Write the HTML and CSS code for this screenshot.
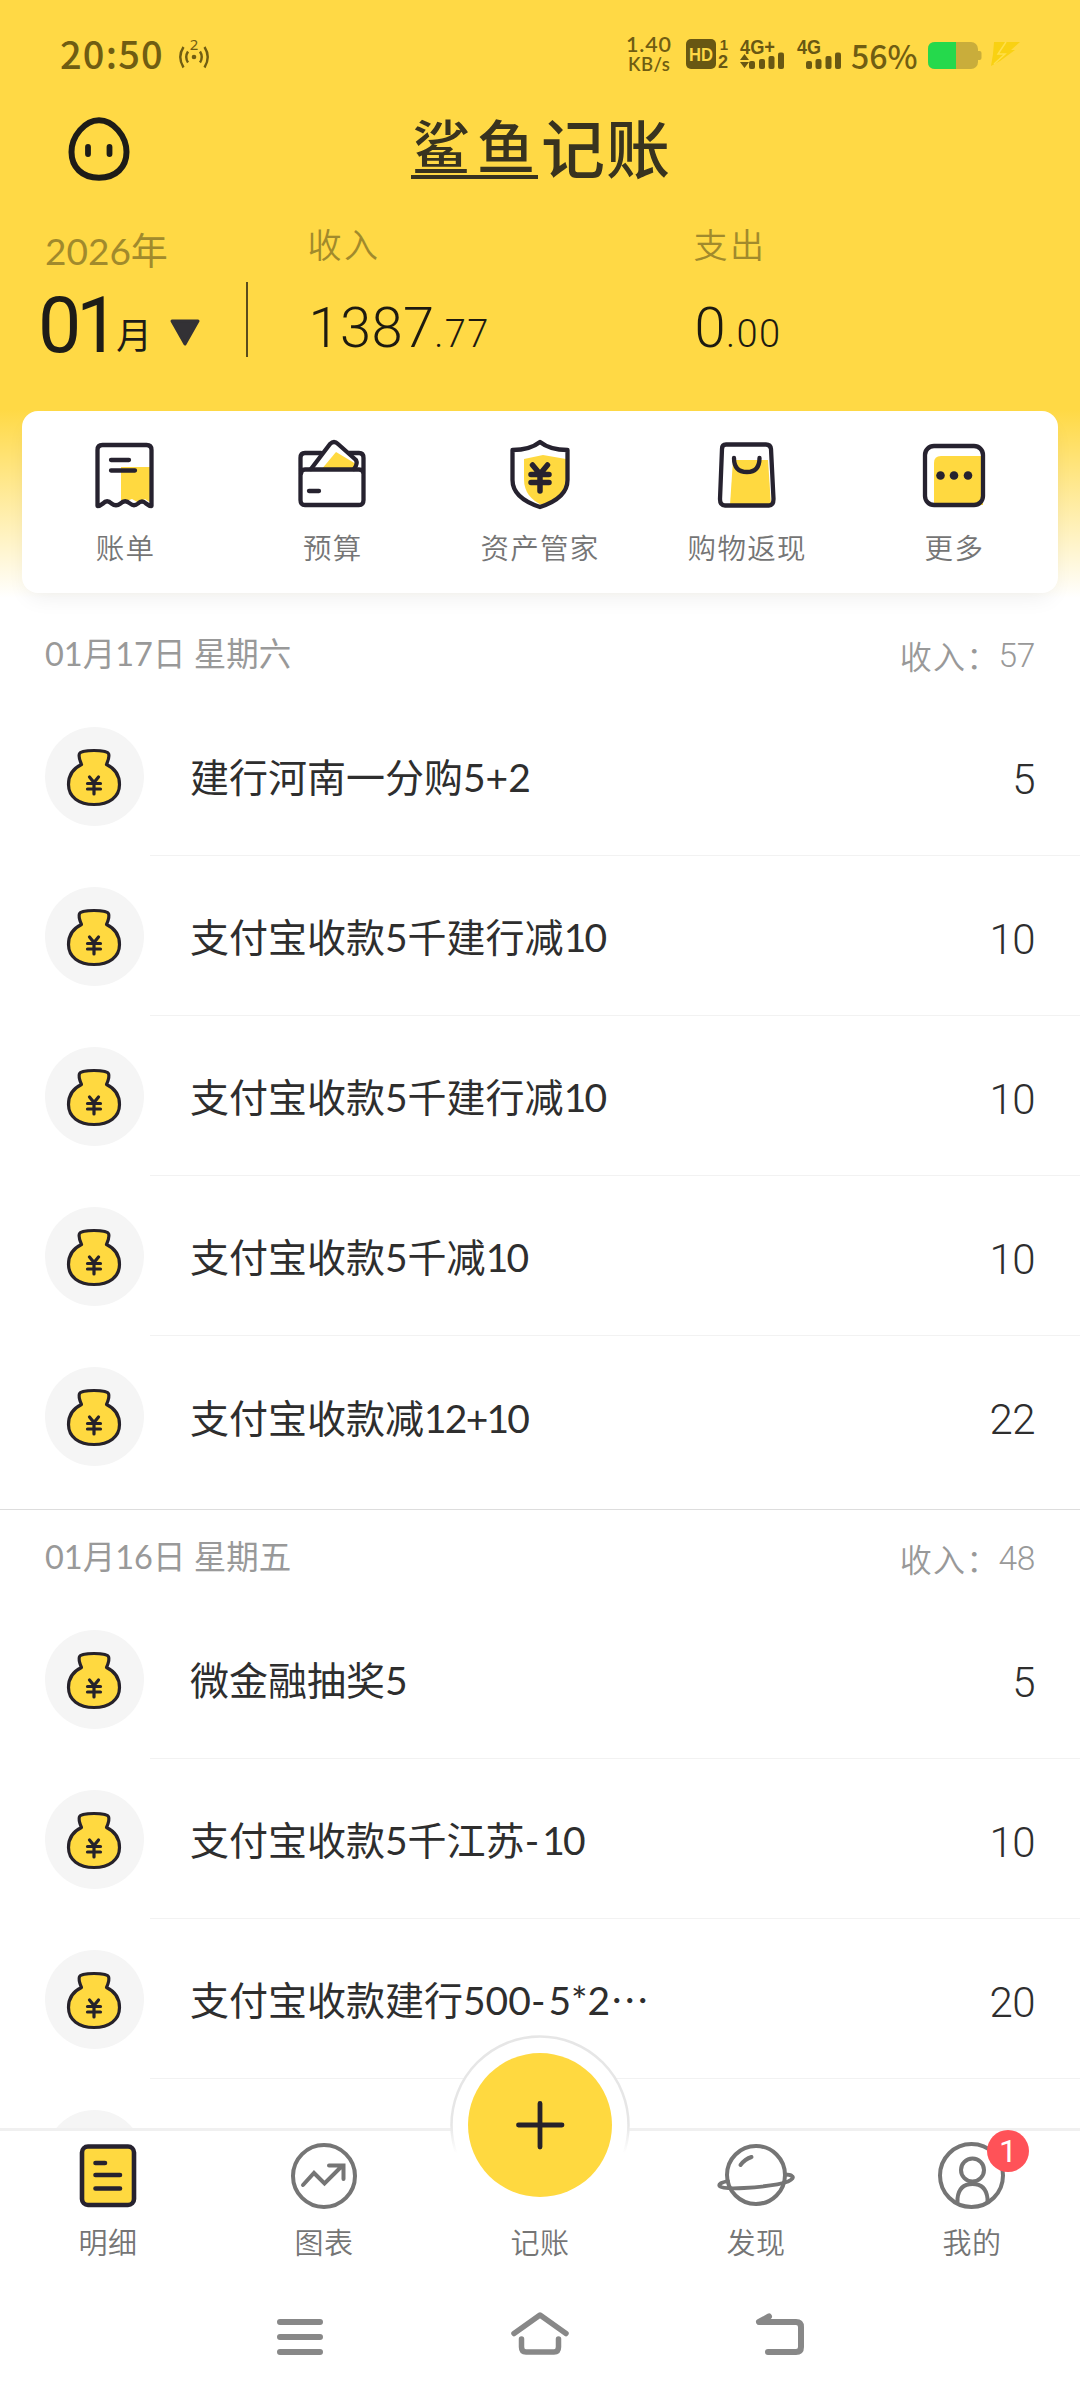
FILE: index.html
```html
<!DOCTYPE html>
<html lang="zh-CN">
<head>
<meta charset="utf-8">
<title>鲨鱼记账</title>
<link rel="stylesheet" href="styles.css">
</head>
<body>
<svg class="defs" width="0" height="0" aria-hidden="true">
  <symbol id="bag" viewBox="0 0 56 60">
    <path d="M15.500 17.500C13 12 12.500 9 13.500 6.500C15 2.500 41 2.500 42.500 6.500C43.500 9 43 12 40.500 17.500C49 21.500 53.500 29 53.500 37.500C53.500 50 43 57.500 28 57.500C13 57.500 2.500 50 2.500 37.500C2.500 29 7 21.500 15.500 17.500Z" fill="#ffd940" stroke="#26222a" stroke-width="3.200" stroke-linejoin="round"/>
    <path d="M23.500 30L28 35.500L32.500 30M21.500 36.500H34.500M21.500 42H34.500M28 36V47" fill="none" stroke="#26222a" stroke-width="3.200" stroke-linecap="round" stroke-linejoin="round"/>
  </symbol>
</svg>
<div class="app">
  <header class="top">
    <div class="status">
      <span class="clock">20:50</span>
      <svg class="hotspot" width="32" height="36" viewBox="0 -4 32 36" fill="none" stroke="#705d12" stroke-width="2.400">
        <text x="16" y="12" class="t-hot">2</text>
        <circle cx="16" cy="19" r="2.300" fill="#705d12" stroke="none"/>
        <path d="M10 13.500Q6.500 19 10 24.500M22 13.500Q25.500 19 22 24.500M5.500 9Q-1 19 5.500 29.500M26.500 9Q33 19 26.500 29.500"/>
      </svg>
      <span class="speed"><b>1.40</b><i>KB/s</i></span>
      <svg class="signals" width="160" height="40" viewBox="0 -2 160 40" fill="#685713">
        <rect x="0" y="3" width="30" height="30" rx="5"/>
        <text x="15" y="25" class="t-hd" textLength="24" lengthAdjust="spacingAndGlyphs">HD</text>
        <text x="38" y="14" class="t-num">1</text>
        <text x="37" y="32" class="t-num2">2</text>
        <text x="54" y="17.500" class="t-net" textLength="35" lengthAdjust="spacingAndGlyphs">4G+</text>
        <path d="M58.500 18L63 24H54ZM58.500 32L63 26H54Z"/>
        <rect x="63" y="25" width="6" height="8" rx="2"/><rect x="73" y="23" width="6" height="10" rx="2"/><rect x="82.500" y="20" width="6" height="13" rx="2"/><rect x="92" y="16.500" width="6" height="16.500" rx="2"/>
        <text x="111" y="17.500" class="t-net" textLength="24" lengthAdjust="spacingAndGlyphs">4G</text>
        <rect x="120" y="25" width="6" height="8" rx="2"/><rect x="129.500" y="23" width="6" height="10" rx="2"/><rect x="139.500" y="20" width="6" height="13" rx="2"/><rect x="149" y="16.500" width="6" height="16.500" rx="2"/>
      </svg>
      <span class="percent">56%</span>
      <svg class="battery" width="94" height="28" viewBox="0 0 94 28">
        <rect x="0" y="0" width="50" height="27" rx="7" fill="#c9ad3b"/>
        <path d="M50 9h1.500q2 0 2 2v5q0 2-2 2H50z" fill="#c9ad3b"/>
        <path d="M7 0H28V27H7Q0 27 0 20V7Q0 0 7 0Z" fill="#25d94c"/>
        <path d="M66 0H92L83 8H87L72 19L63 24L65 12Z" fill="#f9d112"/>
        <path d="M78 0L70 12H77L66 22" fill="none" stroke="#ffdf4a" stroke-width="1.500"/>
      </svg>
    </div>
    <div class="brand">
      <svg class="avatar" width="62" height="64" viewBox="0 0 62 64" fill="none" stroke="#1d1c18">
        <path d="M31 3.200C45 3.200 58.500 19 58.500 35C58.500 50 48 60.800 31 60.800C14 60.800 3.500 50 3.500 35C3.500 19 17 3.200 31 3.200Z" stroke-width="6"/>
        <path d="M20 30V37M41.500 30V37" stroke-width="5.800" stroke-linecap="round"/>
      </svg>
      <h1 class="logo"><span class="logo-a">鲨鱼</span><span class="logo-b">记账</span></h1>
    </div>
    <div class="summary">
      <div class="month">
        <div class="year">2026年</div>
        <div class="pick"><span class="mm">01</span><span class="yue">月</span>
          <svg class="tri" width="32" height="28" viewBox="0 0 32 28"><path d="M3 2H29L16 25Z" fill="#333135" stroke="#333135" stroke-width="3" stroke-linejoin="round"/></svg>
        </div>
      </div>
      <div class="rule"></div>
      <div class="sum income"><div class="cap">收入</div><div class="money">1387<small>.77</small></div></div>
      <div class="sum"><div class="cap">支出</div><div class="money">0<small>.00</small></div></div>
    </div>
    <nav class="card">
      <a class="tool">
        <svg width="72" height="72" viewBox="0 0 72 72" fill="none" stroke="#26222f" stroke-width="4.300" stroke-linecap="round" stroke-linejoin="round">
          <path d="M32 29H62V65L56 61L50 65L43 61L32 65Z" fill="#ffd940" stroke="none"/>
          <path d="M8.500 68V12Q8.500 7 13.500 7H57.500Q62.500 7 62.500 12V68Q60 68 57 65.500Q53 61.500 49 65.500Q45 69 41 65.500Q36 61 31.500 65.500Q27 69 22.500 65.500Q18 61 14 65.500Q11 68 8.500 68Z"/>
          <path d="M22 22H40M22 32.500H46"/>
        </svg>
        <span>账单</span></a>
      <a class="tool">
        <svg width="72" height="72" viewBox="0 0 72 72" fill="none" stroke="#26222f" stroke-width="4.300" stroke-linecap="round" stroke-linejoin="round">
          <path d="M25 32L40 14L60 26V32Z" fill="#ffd940" stroke="none"/>
          <path d="M25 15H9Q4.500 15 4.500 20V62Q4.500 67 9 67H63Q67.500 67 67.500 62V20Q67.500 15 63 15H53M5 36Q5 31.500 9 31.500H63Q67.500 31.500 67.500 36"/>
          <path d="M15 31L34 6Q38 2 42 6L60 22Q62 26 58 31"/>
          <path d="M13 53H23"/>
        </svg>
        <span>预算</span></a>
      <a class="tool">
        <svg width="72" height="72" viewBox="0 0 72 72" fill="none" stroke="#26222f" stroke-width="4.300" stroke-linecap="round" stroke-linejoin="round">
          <path d="M20 21L39 17L62 21V41Q62 58 40 68Q20 60 20 41Z" fill="#ffd940" stroke="none"/>
          <path d="M36 4Q26 12 8.500 12V42Q8.500 60 36 69Q63.500 60 63.500 42V12Q46 12 36 4Z"/>
          <path d="M28.500 27L36 36L43.500 27M27 36.500H45M27 44.500H45M36 36.500V53" stroke-width="5.500"/>
        </svg>
        <span>资产管家</span></a>
      <a class="tool">
        <svg width="72" height="72" viewBox="0 0 72 72" fill="none" stroke="#26222f" stroke-width="4.300" stroke-linecap="round" stroke-linejoin="round">
          <path d="M22 22H57L60 67H19Z" fill="#ffd940" stroke="none"/>
          <path d="M15 6.500H55Q59.500 6.500 60 11L62.500 61Q62.500 67.500 58 67.500H14Q9 67.500 9 61L11 11Q11 6.500 15 6.500Z"/>
          <path d="M23 20Q23 34 36 34Q48.500 34 48.500 20"/>
        </svg>
        <span>购物返现</span></a>
      <a class="tool">
        <svg width="72" height="72" viewBox="0 0 72 72" fill="none" stroke="#26222f" stroke-width="4.300" stroke-linecap="round" stroke-linejoin="round">
          <path d="M23 18H65V67H16V25Q16 18 23 18Z" fill="#ffd940" stroke="none"/>
          <rect x="7" y="8" width="58" height="59" rx="9"/>
          <g fill="#26222f" stroke="none"><circle cx="22.500" cy="37.500" r="4.300"/><circle cx="36" cy="37.500" r="4.300"/><circle cx="50" cy="37.500" r="4.300"/></g>
        </svg>
        <span>更多</span></a>
    </nav>
  </header>

  <main class="list">
    <section class="day">
      <div class="day-head"><span class="date">01月17日 星期六</span><span class="total">收入：<em>57</em></span></div>
      <div class="row"><span class="disc"><svg width="56" height="60"><use href="#bag"/></svg></span><div class="cell"><span class="name">建行河南一分购5+2</span><span class="amt">5</span></div></div>
      <div class="row"><span class="disc"><svg width="56" height="60"><use href="#bag"/></svg></span><div class="cell"><span class="name">支付宝收款5千建行减<span class="num">10</span></span><span class="amt">10</span></div></div>
      <div class="row"><span class="disc"><svg width="56" height="60"><use href="#bag"/></svg></span><div class="cell"><span class="name">支付宝收款5千建行减<span class="num">10</span></span><span class="amt">10</span></div></div>
      <div class="row"><span class="disc"><svg width="56" height="60"><use href="#bag"/></svg></span><div class="cell"><span class="name">支付宝收款5千减<span class="num">10</span></span><span class="amt">10</span></div></div>
      <div class="row last"><span class="disc"><svg width="56" height="60"><use href="#bag"/></svg></span><div class="cell"><span class="name">支付宝收款减<span class="num">12+10</span></span><span class="amt">22</span></div></div>
    </section>
    <section class="day">
      <div class="day-head"><span class="date">01月16日 星期五</span><span class="total">收入：<em>48</em></span></div>
      <div class="row"><span class="disc"><svg width="56" height="60"><use href="#bag"/></svg></span><div class="cell"><span class="name">微金融抽奖5</span><span class="amt">5</span></div></div>
      <div class="row"><span class="disc"><svg width="56" height="60"><use href="#bag"/></svg></span><div class="cell"><span class="name">支付宝收款5千江苏<span class="dash">-</span><span class="num">10</span></span><span class="amt">10</span></div></div>
      <div class="row"><span class="disc"><svg width="56" height="60"><use href="#bag"/></svg></span><div class="cell"><span class="name">支付宝收款建行500<span class="dash">-</span>5*2<span class="dots">…</span></span><span class="amt">20</span></div></div>
      <div class="row"><span class="disc"></span><div class="cell"></div></div>
    </section>
  </main>

  <footer class="bottom">
    <nav class="tabs">
      <a class="tab">
        <svg width="80" height="70" viewBox="0 0 80 70" fill="none" stroke="#26222f" stroke-width="4.600" stroke-linecap="round">
          <rect x="14" y="5.500" width="52" height="58.500" rx="6" fill="#ffd940"/>
          <path d="M27.500 22H37M27.500 34H52M27.500 47.500H52"/>
        </svg><span>明细</span></a>
      <a class="tab">
        <svg width="80" height="70" viewBox="0 0 80 70" fill="none" stroke="#757575" stroke-width="4" stroke-linecap="round" stroke-linejoin="round">
          <circle cx="40" cy="35" r="31"/>
          <path d="M19 44L30 32L40.500 42.500L58 25M45 24.500H59.500V38" stroke-linejoin="miter"/>
        </svg><span>图表</span></a>
      <a class="tab">
        <svg class="fab" width="184" height="184" viewBox="0 0 184 184">
          <defs><linearGradient id="fade" x1="0" y1="0" x2="0" y2="1"><stop offset=".5" stop-color="#e6e6e6"/><stop offset=".66" stop-color="#fff"/></linearGradient></defs>
          <circle cx="92" cy="92" r="88.500" fill="#fff" stroke="url(#fade)" stroke-width="2.500"/>
          <circle cx="92" cy="92" r="72" fill="#ffd940"/>
          <path d="M92 70.500V114M70.500 92H114" stroke="#26222a" stroke-width="4.800" stroke-linecap="round"/>
        </svg><span class="fab-label">记账</span></a>
      <a class="tab">
        <svg width="80" height="70" viewBox="0 0 80 70" fill="none" stroke="#757575" stroke-width="4" stroke-linecap="round">
          <circle cx="40" cy="34" r="29"/>
          <path d="M24.500 24Q29 18 35.500 16"/>
          <path d="M12 40Q2 42 3.500 45Q6 48 28 47Q60 45 72 40.500Q79 37 76 35Q74 33.500 69 33.500" stroke-width="3.800"/>
        </svg><span>发现</span></a>
      <a class="tab">
        <svg width="80" height="70" viewBox="0 0 80 70" fill="none" stroke="#757575" stroke-width="4" stroke-linecap="round">
          <circle cx="39.500" cy="34.500" r="31.500"/>
          <circle cx="40.500" cy="29" r="11.500"/>
          <path d="M25.500 60.500V57.500Q27 43 40.500 43Q54 43 55.500 57.500V60.500"/>
        </svg><span>我的</span><b class="badge">1</b></a>
    </nav>
    <div class="sysnav">
      <svg width="60" height="50" viewBox="0 0 60 50" fill="none" stroke="#888" stroke-width="6" stroke-linecap="round"><path d="M10 10H50M10 25H50M10 40H50"/></svg>
      <svg width="60" height="50" viewBox="0 0 60 50" fill="none" stroke="#888" stroke-width="5.500" stroke-linecap="round" stroke-linejoin="round"><path d="M4 21.500L30 3L56 21.500M11.500 27V35Q11.500 40 16 40H44Q48.500 40 48.500 35V27"/></svg>
      <svg width="60" height="50" viewBox="0 0 60 50" fill="none" stroke="#888" stroke-width="6" stroke-linecap="round" stroke-linejoin="round"><path d="M19 4.500L9 10H46Q51 10 51 15V35Q51 40 46 40H18"/></svg>
    </div>
  </footer>
</div>
</body>
</html>
```
FILE: styles.css
```css
* { box-sizing: border-box; }
body { margin: 0; background: #fff; font-family: "Lato", "Noto Sans CJK SC", sans-serif; color: #2e2e2e; }
.defs { display: block; height: 0; }
svg { display: block; flex: none; overflow: visible; }
.app { width: 1080px; height: 2400px; display: flex; flex-direction: column; overflow: hidden; position: relative; }

.top { flex: none; height: 607px; background: linear-gradient(#ffd945 0, #ffd945 410px, #fff 598px); }
.status { height: 106px; padding: 0 60px 0 60px; display: flex; align-items: flex-start; color: #705d12; }
.clock { font: 500 38px/40px "Noto Sans CJK SC", sans-serif; margin-top: 33px; width: 118px; letter-spacing: 1.200px; }
.hotspot { margin-top: 34px; }
.t-hot { font: 15px "Noto Sans", sans-serif; fill: #705d12; stroke: none; text-anchor: middle; }
.speed { margin: 33px 14px 0 auto; width: 46px; display: flex; flex-direction: column; white-space: nowrap; }
.speed b { font: 600 21.500px/22px "Lato", sans-serif; letter-spacing: .8px; }
.speed i { font: 600 18.500px/18px "Lato", sans-serif; padding-left: 2px; letter-spacing: .5px; }
.signals { margin-top: 34px; margin-right: 5px; }
.t-hd { font: 700 19px "Liberation Sans", sans-serif; fill: #ffd945; text-anchor: middle; }
.t-num { font: 700 15px "Liberation Sans", sans-serif; text-anchor: middle; }
.t-num2 { font: 700 18px "Liberation Sans", sans-serif; text-anchor: middle; }
.t-net { font: 700 20px "Liberation Sans", sans-serif; }
.percent { font: 500 32px/36px "Noto Sans CJK SC", sans-serif; margin-top: 37px; width: 77px; }
.battery { margin-top: 42px; margin-right: -2px; }

.brand { height: 90px; padding: 11px 0 0 68px; display: flex; }
.logo { margin: 0 0 0 281px; display: flex; font: 500 64px/64px "Noto Sans CJK SC", sans-serif; color: #38331f; }
.logo-a { font-size: 58px; line-height: 54px; height: 62px; width: 127px; padding-left: 1px; letter-spacing: 7px; border-bottom: 4px solid #38331f; white-space: nowrap; }
.logo-b { letter-spacing: 1px; margin-left: 3px; line-height: 57px; }

.summary { height: 215px; padding-left: 40px; display: flex; }
.month { width: 206px; }
.year { margin-top: 33px; padding-left: 5px; font-size: 37px; line-height: 44px; font-weight: 400; color: #a18a2c; }
.pick { display: flex; align-items: flex-end; height: 83px; color: #1d1c18; }
.mm { font: 400 77px/59px Roboto, sans-serif; letter-spacing: -5px; width: 78px; margin-left: -2px; }
.yue { font: 400 36px/46px "Noto Sans CJK SC", sans-serif; width: 53px; }
.tri { margin-bottom: 9px; }
.rule { width: 1.500px; height: 75px; margin-top: 86px; background: #5a4c1c; }
.sum { width: 386px; padding-left: 0; }
.income { margin-left: 60px; }
.cap { margin-top: 26px; font: 350 34px/44px "Noto Sans CJK SC", sans-serif; letter-spacing: 2.500px; color: #a18a2c; }
.money { margin-top: 29px; font: 300 56px/66px Roboto, sans-serif; letter-spacing: .4px; color: #1d1a10; padding-left: 1px; }
.money small { font-size: 38px; letter-spacing: 1.400px; }

.card { width: 1036px; height: 182px; margin: 0 auto; background: #fff; border-radius: 16px; display: flex; box-shadow: 0 10px 22px -6px rgba(0,0,0,.07); }
.tool { flex: 1; display: flex; flex-direction: column; align-items: center; padding-top: 27px; }
.tool svg { margin-left: -1px; }
.tool span { margin-top: 17px; font: 350 28.500px/40px "Noto Sans CJK SC", sans-serif; letter-spacing: 1.300px; color: #757575; }

.list { height: 1521px; overflow: hidden; flex: none; }
.day-head { height: 89px; padding: 0 45px; display: flex; justify-content: space-between; color: #999; }
.date { font-size: 32.500px; line-height: 40px; margin-top: 27px; }
.total { font: 350 32px/40px "Noto Sans CJK SC", sans-serif; letter-spacing: 1.200px; margin-top: 28px; display: flex; }
.total em { font: 300 33.500px/42px Roboto, sans-serif; letter-spacing: -.3px; margin-left: -1px; }
.row { height: 160px; padding-left: 45px; display: flex; align-items: center; }
.disc { width: 99px; height: 99px; border-radius: 50%; background: #f5f5f5; display: flex; align-items: center; justify-content: center; margin-top: 1px; padding: 0 1px 0 0; }
.cell { flex: 1; height: 160px; margin-left: 6px; padding: 3px 45px 0 40px; display: flex; align-items: center; justify-content: space-between; border-bottom: 1px solid #f2f2f2; }
.row.last { height: 174px; align-items: flex-start; border-bottom: 1.500px solid #ddd; }
.row.last .disc { margin-top: 31px; }
.row.last .cell { border: 0; }
.name { font-size: 39px; font-weight: 400; margin-top: -4px; }
.num { letter-spacing: -1.800px; }
.dots { font-family: "Noto Sans CJK SC", sans-serif; }
.dash { letter-spacing: 3px; }
.amt { font: 300 42px/50px Roboto, sans-serif; letter-spacing: -.5px; padding-top: 5px; }

.bottom { flex: none; height: 272px; background: #fff; border-top: 3px solid #f0f0f0; }
.tabs { display: flex; height: 150px; }
.tab { flex: 1; position: relative; display: flex; flex-direction: column; align-items: center; padding-top: 10px; }
.tab span { margin-top: 10px; font: 350 29px/40px "Noto Sans CJK SC", sans-serif; letter-spacing: .5px; color: #757575; }
.fab { position: absolute; left: 16px; top: -98px; }
.tab .fab-label { margin-top: 80px; }
.badge { position: absolute; left: 123px; top: -1px; width: 42px; height: 42px; border-radius: 50%; background: #ff5258; color: #fff; font: 400 32px/42px Roboto, sans-serif; text-align: center; }
.sysnav { display: flex; justify-content: center; gap: 180px; padding-top: 31px; }
```
